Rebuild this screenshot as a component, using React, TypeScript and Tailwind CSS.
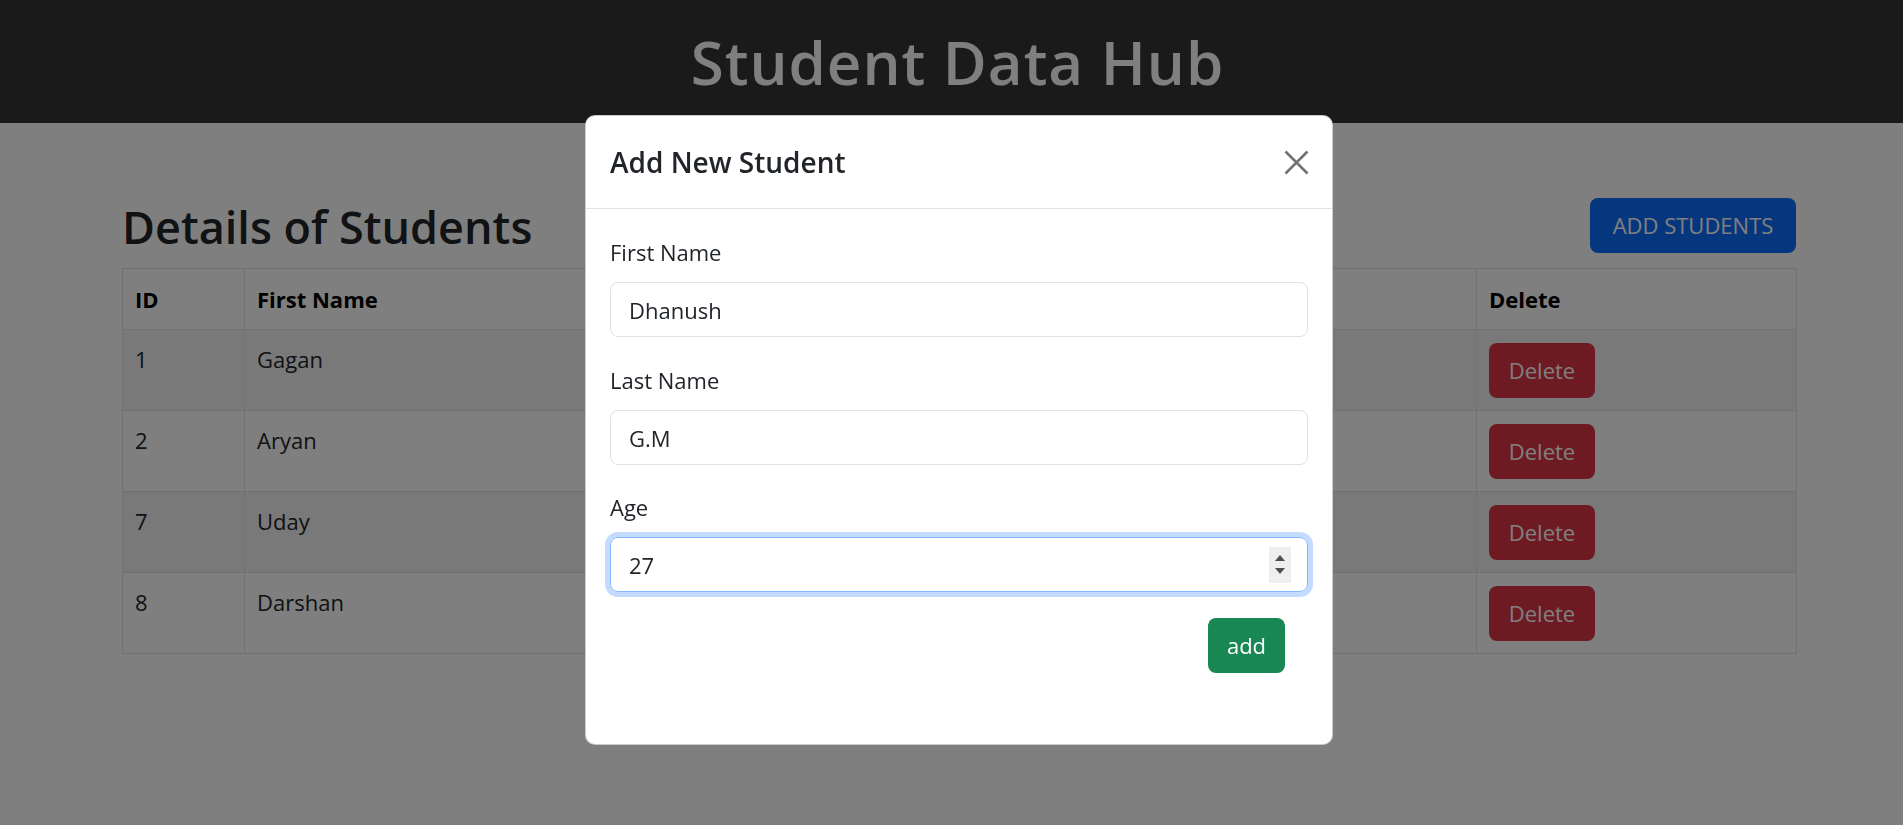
import React from "react";

const rows = [
  { id: 1, first: "Gagan", last: "K", age: 21 },
  { id: 2, first: "Aryan", last: "S", age: 22 },
  { id: 7, first: "Uday", last: "R", age: 23 },
  { id: 8, first: "Darshan", last: "M", age: 24 },
];

export default function App() {
  return (
    <div className="min-h-[825px] bg-white font-['Open_Sans',sans-serif] text-[#212529]">
      <header className="flex h-[123px] items-center justify-center bg-[#343434] pl-[12px]">
        <h1 className="text-[60px] font-semibold leading-none tracking-[1px] text-white">
          Student Data Hub
        </h1>
      </header>

      <main className="ml-[122px] w-[1674px] pt-[75px]">
        <div className="flex items-start justify-between">
          <h2 className="text-[45px] font-semibold leading-[58px]">Details of Students</h2>
          <button className="h-[55px] w-[206px] rounded-[8px] bg-[#0d6efd] text-[22px] text-white">
            ADD STUDENTS
          </button>
        </div>

        <table className="mt-[12px] w-[1674px] table-fixed border-collapse text-[22px] leading-[33px]">
          <colgroup>
            <col className="w-[122px]" />
            <col className="w-[456px]" />
            <col className="w-[400px]" />
            <col className="w-[376px]" />
            <col className="w-[320px]" />
          </colgroup>
          <thead>
            <tr className="h-[61px] bg-white">
              <th className="border border-[#dee2e6] px-[12px] text-left font-bold text-black">ID</th>
              <th className="border border-[#dee2e6] px-[12px] text-left font-bold text-black">First Name</th>
              <th className="border border-[#dee2e6] px-[12px] text-left font-bold text-black">Last Name</th>
              <th className="border border-[#dee2e6] px-[12px] text-left font-bold text-black">Age</th>
              <th className="border border-[#dee2e6] px-[12px] text-left font-bold text-black">Delete</th>
            </tr>
          </thead>
          <tbody>
            {rows.map((r, i) => (
              <tr key={r.id} className={i % 2 === 0 ? "bg-[#f2f2f2]" : "bg-white"}>
                <td className="border border-[#dee2e6] px-[12px] py-[12.5px] align-top">{r.id}</td>
                <td className="border border-[#dee2e6] px-[12px] py-[12.5px] align-top">{r.first}</td>
                <td className="border border-[#dee2e6] px-[12px] py-[12.5px] align-top">{r.last}</td>
                <td className="border border-[#dee2e6] px-[12px] py-[12.5px] align-top">{r.age}</td>
                <td className="border border-[#dee2e6] px-[12px] py-[12.5px] align-top">
                  <button className="h-[55px] w-[106px] rounded-[8px] bg-[#dc3545] text-[22px] text-white">
                    Delete
                  </button>
                </td>
              </tr>
            ))}
          </tbody>
        </table>
      </main>

      {/* backdrop */}
      <div className="fixed inset-0 bg-black/50" />

      {/* modal */}
      <div className="absolute left-[585px] top-[115px] flex h-[630px] w-[748px] flex-col rounded-[10px] border border-black/20 bg-white">
        <div className="flex h-[93px] items-center justify-between border-b border-[#dee2e6] pl-[24px] pr-[23px]">
          <h5 className="text-[28px] font-semibold leading-none text-[#212529]">Add New Student</h5>
          <svg width="25" height="25" viewBox="0 0 25 25" className="opacity-55">
            <path d="M1.5 1.5 L23.5 23.5 M23.5 1.5 L1.5 23.5" stroke="#000" strokeWidth="2.6" fill="none" />
          </svg>
        </div>
        <div className="flex flex-col px-[24px] pt-[27px]">
          <label className="mb-[13px] text-[22px] leading-[33px]">First Name</label>
          <input
            defaultValue="Dhanush"
            className="h-[55px] rounded-[8px] border border-[#dee2e6] px-[18px] text-[22px] text-[#212529] outline-none"
          />
          <label className="mb-[13px] mt-[27px] text-[22px] leading-[33px]">Last Name</label>
          <input
            defaultValue="G.M"
            className="h-[55px] rounded-[8px] border border-[#dee2e6] px-[18px] text-[22px] text-[#212529] outline-none"
          />
          <label className="mb-[13px] mt-[26px] text-[22px] leading-[33px]">Age</label>
          <div className="relative">
            <input
              defaultValue="27"
              className="h-[55px] w-full rounded-[8px] border border-[#86b7fe] px-[18px] text-[22px] text-[#212529] shadow-[0_0_0_5px_#c2dbfe] outline-none"
            />
            <div className="absolute right-[17px] top-[9.5px] flex h-[36px] w-[22px] flex-col items-center justify-center gap-[7px] bg-[#efefef]">
              <svg width="10" height="6" viewBox="0 0 10 6">
                <path d="M5 0 L10 6 L0 6 Z" fill="#505050" />
              </svg>
              <svg width="10" height="6" viewBox="0 0 10 6">
                <path d="M0 0 L10 0 L5 6 Z" fill="#505050" />
              </svg>
            </div>
          </div>
          <button className="mr-[23px] mt-[26px] h-[55px] w-[77px] self-end rounded-[8px] bg-[#198754] text-[22px] text-white">
            add
          </button>
        </div>
      </div>
    </div>
  );
}
